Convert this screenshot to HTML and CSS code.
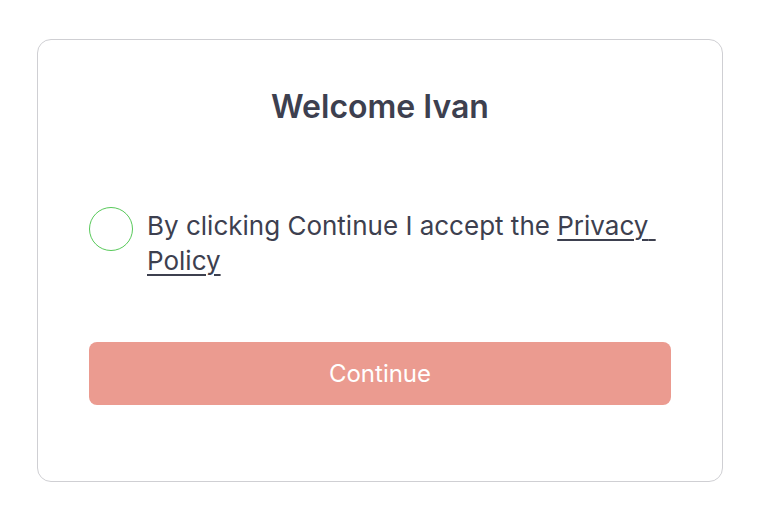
FILE: index.html
```html
<!DOCTYPE html>
<html>
<head>
<meta charset="utf-8">
<link rel="stylesheet" href="styles.css">
</head>
<body>
<div class="card">
  <h1 class="title">Welcome Ivan</h1>
  <label class="consent">
    <span class="check"></span>
    <span class="consent-text">By clicking Continue I accept the <a class="link" href="#">Privacy Policy</a></span>
  </label>
  <button class="btn">Continue</button>
</div>
</body>
</html>
```
FILE: styles.css
```css
html, body { margin: 0; padding: 0; background: #fff; }
body {
  font-family: Inter, "Noto Sans", sans-serif;
  color: #3d404f;
  padding: 39px 0 0 37px;
}
.card {
  box-sizing: border-box;
  width: 686px;
  height: 443px;
  border: 1px solid #cfcfd3;
  border-radius: 14px;
  padding: 47px 51px 0 51px;
}
.title {
  margin: 0;
  text-align: center;
  font-size: 32px;
  font-weight: 600;
  line-height: 40px;
  color: #3d404f;
}
.consent {
  display: flex;
  align-items: flex-start;
  gap: 14px;
  margin-top: 80px;
}
.check {
  flex: none;
  box-sizing: border-box;
  width: 44px;
  height: 44px;
  border: 1px solid #58c95a;
  border-radius: 50%;
}
.consent-text {
  font-size: 26px;
  line-height: 35px;
  padding-top: 1px;
  width: 522px;
}
.link {
  color: #3d404f;
  white-space: pre-wrap;
  text-decoration: underline;
  text-decoration-thickness: 2px;
  text-underline-offset: 4px;
}
.btn {
  display: block;
  width: 582px;
  height: 63px;
  margin-top: 64px;
  border: 0;
  border-radius: 8px;
  background: #eb9b90;
  color: #fff;
  font-family: inherit;
  font-size: 24px;
  font-weight: 400;
}
```
